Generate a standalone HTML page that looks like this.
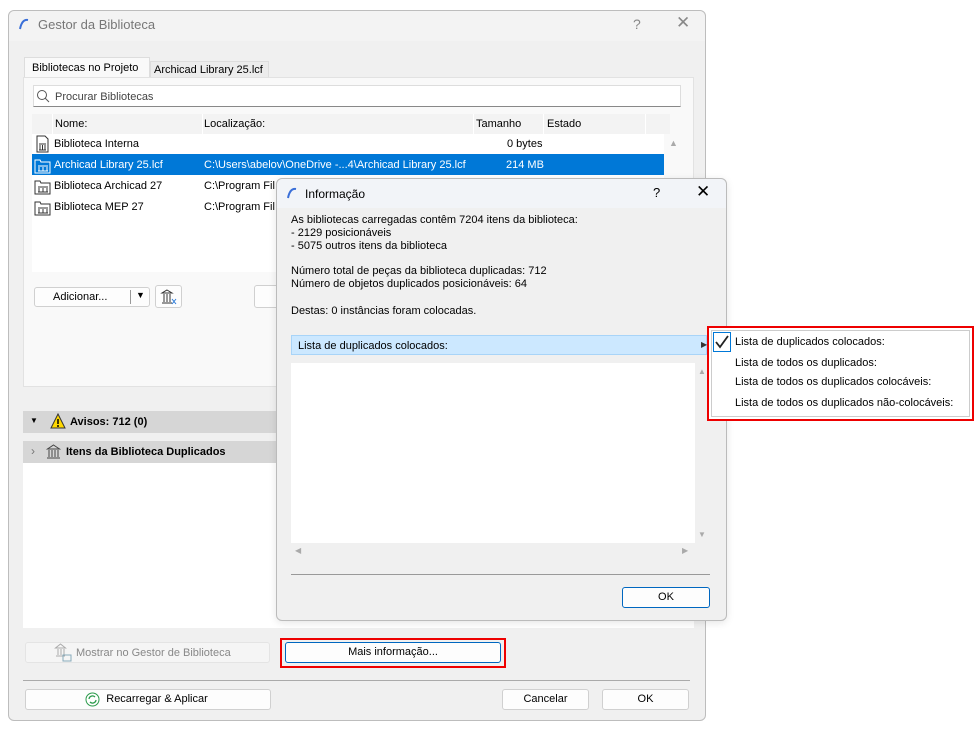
<!DOCTYPE html>
<html><head><meta charset="utf-8"><style>
body{margin:0;width:980px;height:732px;background:#fff;font-family:"Liberation Sans",sans-serif;font-size:11px;color:#000;position:relative;overflow:hidden}
.a{position:absolute}
.btn{position:absolute;background:#fdfdfd;border:1px solid #d0d0d0;border-radius:3px;text-align:center;box-sizing:border-box}
</style></head><body>
<!-- main dialog -->
<div class="a" style="left:8px;top:10px;width:698px;height:711px;border:1px solid #bdbdbd;border-radius:6px;background:#f0f0f0;box-sizing:border-box"></div>
<div class="a" style="left:9px;top:11px;width:696px;height:30px;background:#f3f3f3;border-radius:6px 6px 0 0"></div>
<svg class="a" style="left:18px;top:18px" width="12" height="12"><path d="M2 11 Q4 1 10 2" stroke="#3a6fd8" stroke-width="2" fill="none"/></svg>
<div class="a" style="left:38px;top:17px;font-size:13px;color:#777">Gestor da Biblioteca</div>
<div class="a" style="left:633px;top:16px;font-size:14px;color:#888">?</div>
<div class="a" style="left:676px;top:13px;font-size:17px;color:#888">✕</div>
<!-- tabs -->
<div class="a" style="left:24px;top:57px;width:126px;height:21px;background:#f9f9f9;border:1px solid #ddd;border-bottom:none;box-sizing:border-box"></div>
<div class="a" style="left:32px;top:62px">Bibliotecas no Projeto</div>
<div class="a" style="left:150px;top:61px;width:119px;height:17px;background:#ececec;border:1px solid #ddd;border-bottom:none;box-sizing:border-box"></div>
<div class="a" style="left:154px;top:64px">Archicad Library 25.lcf</div>
<div class="a" style="left:23px;top:77px;width:671px;height:310px;background:#f9f9f9;border:1px solid #e2e2e2;box-sizing:border-box"></div>
<div class="a" style="left:33px;top:85px;width:648px;height:22px;background:#fff;border:1px solid #ddd;border-bottom:1px solid #888;box-sizing:border-box"></div>
<svg class="a" style="left:36px;top:89px" width="14" height="14"><circle cx="6" cy="6" r="4.5" stroke="#555" fill="none"/><path d="M9 9l4 4" stroke="#555"/></svg>
<div class="a" style="left:55px;top:91px;color:#444">Procurar Bibliotecas</div>
<!-- list -->
<div class="a" style="left:32px;top:114px;width:632px;height:158px;background:#fff"></div>
<div class="a" style="left:32px;top:114px;width:638px;height:20px;background:#f3f3f3"></div>
<div class="a" style="left:52px;top:114px;width:1px;height:20px;background:#fff"></div>
<div class="a" style="left:202px;top:114px;width:1px;height:20px;background:#fff"></div>
<div class="a" style="left:473px;top:114px;width:1px;height:20px;background:#fff"></div>
<div class="a" style="left:543px;top:114px;width:1px;height:20px;background:#fff"></div>
<div class="a" style="left:645px;top:114px;width:1px;height:20px;background:#fff"></div>
<div class="a" style="left:55px;top:118px">Nome:</div>
<div class="a" style="left:204px;top:118px">Localização:</div>
<div class="a" style="left:476px;top:118px">Tamanho</div>
<div class="a" style="left:547px;top:118px">Estado</div>
<div class="a" style="left:669px;top:138px;color:#aaa;font-size:9px">▲</div>
<div class="a" style="left:32px;top:154px;width:632px;height:21px;background:#0078d7"></div>
<div class="a" style="left:54px;top:138px">Biblioteca Interna</div><div class="a" style="left:507px;top:138px">0 bytes</div>
<div class="a" style="left:54px;top:159px;color:#fff">Archicad Library 25.lcf</div><div class="a" style="left:204px;top:159px;color:#fff">C:\Users\abelov\OneDrive -...4\Archicad Library 25.lcf</div><div class="a" style="left:506px;top:159px;color:#fff">214 MB</div>
<div class="a" style="left:54px;top:180px">Biblioteca Archicad 27</div><div class="a" style="left:204px;top:180px">C:\Program Fil</div>
<div class="a" style="left:54px;top:201px">Biblioteca MEP 27</div><div class="a" style="left:204px;top:201px">C:\Program Fil</div>
<svg class="a" style="left:34px;top:135px" width="18" height="84" fill="none" stroke="#333">
<path d="M3 1h8l3 3v13H3z"/><path d="M5 9h7M6 10v5M8.5 10v5M11 10v5M5 15h7"/>
<g transform="translate(0,21)" stroke="#fff"><path d="M1 4h5l1 2h9v11H1z"/><path d="M4 10h10M5 11v4M9 11v4M13 11v4M4 15h10"/></g>
<g transform="translate(0,42)"><path d="M1 4h5l1 2h9v11H1z"/><path d="M4 10h10M5 11v4M9 11v4M13 11v4M4 15h10"/></g>
<g transform="translate(0,63)"><path d="M1 4h5l1 2h9v11H1z"/><path d="M4 10h10M5 11v4M9 11v4M13 11v4M4 15h10"/></g>
</svg>
<div class="btn" style="left:34px;top:287px;width:116px;height:20px"></div>
<div class="a" style="left:53px;top:291px">Adicionar...</div>
<div class="a" style="left:130px;top:290px;width:1px;height:14px;background:#999"></div>
<div class="a" style="left:136px;top:290px;font-size:9px">▼</div>
<div class="btn" style="left:155px;top:285px;width:27px;height:23px"></div>
<svg class="a" style="left:160px;top:288px" width="18" height="18" fill="none" stroke="#333"><path d="M2 5h10M4 6v8M7 6v8M10 6v8M2 15h10M7 2l5 3H2z"/><path d="M12 11l4 5M16 11l-4 5" stroke="#2a7ad8"/></svg>
<div class="btn" style="left:254px;top:285px;width:26px;height:23px"></div>
<!-- lower -->
<div class="a" style="left:23px;top:411px;width:260px;height:22px;background:#d6d6d6"></div>
<div class="a" style="left:30px;top:416px;font-size:8px">▼</div>
<svg class="a" style="left:50px;top:413px" width="16" height="16"><path d="M8 1L15 15H1z" fill="#ffd800" stroke="#333"/><path d="M8 6v5M8 12v2" stroke="#000" stroke-width="1.5"/></svg>
<div class="a" style="left:70px;top:416px;font-weight:bold">Avisos: 712 (0)</div>
<div class="a" style="left:23px;top:441px;width:260px;height:22px;background:#d6d6d6"></div>
<div class="a" style="left:31px;top:444px;color:#777;font-size:12px">›</div>
<svg class="a" style="left:45px;top:444px" width="17" height="16" fill="none" stroke="#444"><path d="M2 5h13M4 6v7M7 6v7M10 6v7M13 6v7M2 14h13M8.5 1l6 4h-12z"/></svg>
<div class="a" style="left:66px;top:446px;font-weight:bold">Itens da Biblioteca Duplicados</div>
<div class="a" style="left:23px;top:463px;width:671px;height:165px;background:#fff"></div>
<div class="btn" style="left:25px;top:642px;width:245px;height:21px;background:#f5f5f5;border-color:#e4e4e4"></div>
<div class="a" style="left:76px;top:647px;color:#888">Mostrar no Gestor de Biblioteca</div>
<svg class="a" style="left:54px;top:643px" width="18" height="19" fill="none" stroke="#aaa"><path d="M2 5h9M4 6v6M7 6v6M10 6v6M2 13h9M6.5 1l5 4h-10z"/><rect x="9" y="12" width="8" height="6" stroke="#8ab"/></svg>
<div class="a" style="left:280px;top:638px;width:226px;height:30px;border:2px solid #e00;box-sizing:border-box"></div>
<div class="btn" style="left:285px;top:642px;width:216px;height:21px;border-color:#0067c0;line-height:19px">Mais informação...</div>
<div class="a" style="left:23px;top:680px;width:667px;height:1px;background:#aaa"></div>
<div class="btn" style="left:25px;top:689px;width:246px;height:21px;line-height:19px;padding-left:18px">Recarregar &amp; Aplicar</div>
<svg class="a" style="left:85px;top:692px" width="15" height="15"><circle cx="7.5" cy="7.5" r="6.5" fill="#fff" stroke="#2a9a4a"/><path d="M4 7a3.5 3.5 0 0 1 6-2M11 8a3.5 3.5 0 0 1-6 2" stroke="#2a9a4a" fill="none" stroke-width="1.3"/></svg>
<div class="btn" style="left:502px;top:689px;width:87px;height:21px;line-height:19px">Cancelar</div>
<div class="btn" style="left:602px;top:689px;width:87px;height:21px;line-height:19px">OK</div>
<!-- info dialog -->
<div class="a" style="left:276px;top:178px;width:451px;height:443px;background:#f0f0f0;border:1px solid #bbb;border-radius:6px;box-sizing:border-box;box-shadow:0 2px 8px rgba(0,0,0,.1)"></div>
<div class="a" style="left:277px;top:179px;width:449px;height:29px;background:#f2f4f8;border-radius:6px 6px 0 0"></div>
<svg class="a" style="left:286px;top:187px" width="12" height="12"><path d="M2 11 Q4 1 10 2" stroke="#3a6fd8" stroke-width="2" fill="none"/></svg>
<div class="a" style="left:305px;top:187px;font-size:12px">Informação</div>
<div class="a" style="left:653px;top:185px;font-size:13px">?</div>
<div class="a" style="left:696px;top:182px;font-size:17px">✕</div>
<div class="a" style="left:291px;top:214px;line-height:13px">As bibliotecas carregadas contêm 7204 itens da biblioteca:<br>- 2129 posicionáveis<br>- 5075 outros itens da biblioteca</div>
<div class="a" style="left:291px;top:265px;line-height:13px">Número total de peças da biblioteca duplicadas: 712<br>Número de objetos duplicados posicionáveis: 64</div>
<div class="a" style="left:291px;top:305px">Destas: 0 instâncias foram colocadas.</div>
<div class="a" style="left:291px;top:335px;width:416px;height:20px;background:#cce8ff;border:1px solid #a8d4f8;box-sizing:border-box"></div>
<div class="a" style="left:298px;top:340px">Lista de duplicados colocados:</div>
<div class="a" style="left:701px;top:340px;font-size:8px;color:#333">▶</div>
<div class="a" style="left:291px;top:363px;width:404px;height:180px;background:#fff"></div>
<div class="a" style="left:698px;top:367px;font-size:8px;color:#aaa">▲</div>
<div class="a" style="left:698px;top:530px;font-size:8px;color:#aaa">▼</div>
<div class="a" style="left:295px;top:546px;font-size:8px;color:#aaa">◀</div>
<div class="a" style="left:682px;top:546px;font-size:8px;color:#aaa">▶</div>
<div class="a" style="left:291px;top:574px;width:419px;height:1px;background:#999"></div>
<div class="btn" style="left:622px;top:587px;width:88px;height:21px;border-color:#0067c0;line-height:19px">OK</div>
<!-- popup menu -->
<div class="a" style="left:707px;top:326px;width:267px;height:95px;border:2px solid #e00;box-sizing:border-box;background:#fff"></div>
<div class="a" style="left:711px;top:330px;width:259px;height:87px;border:1px solid #ccc;box-sizing:border-box;background:#fff"></div>
<div class="a" style="left:713px;top:332px;width:18px;height:20px;border:1px solid #0078d7;box-sizing:border-box"></div>
<svg class="a" style="left:714px;top:334px" width="16" height="16"><path d="M2 8l4 5 8-11" stroke="#222" stroke-width="1.8" fill="none"/></svg>
<div class="a" style="left:735px;top:336px">Lista de duplicados colocados:</div>
<div class="a" style="left:735px;top:357px">Lista de todos os duplicados:</div>
<div class="a" style="left:735px;top:376px">Lista de todos os duplicados colocáveis:</div>
<div class="a" style="left:735px;top:397px">Lista de todos os duplicados não-colocáveis:</div>
</body></html>
